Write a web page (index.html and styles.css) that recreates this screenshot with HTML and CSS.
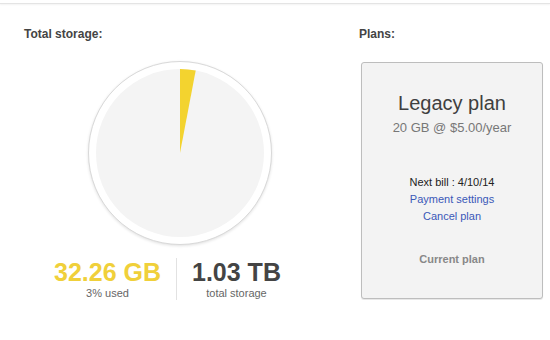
FILE: index.html
```html
<!DOCTYPE html>
<html lang="en">
<head>
    <meta charset="UTF-8">
    <title>Storage</title>
    <link rel="stylesheet" href="styles.css">
</head>
<body>
    <div class="topbar"></div>

    <div class="page">
        <div class="storage">
            <h3>Total storage:</h3>

            <div class="pie">
                <svg width="168" height="168" viewBox="0 0 168 168">
                    <circle cx="84" cy="84" r="84" fill="#f4f4f4"/>
                    <!-- 3% used -->
                    <path d="M84 84 L84 0 A84 84 0 0 1 99.7 1.5 Z" fill="#f3d32f"/>
                </svg>
            </div>

            <div class="stats">
                <div class="stat used">
                    <div class="num">32.26 GB</div>
                    <div class="cap">3% used</div>
                </div>
                <div class="stat total">
                    <div class="num">1.03 TB</div>
                    <div class="cap">total storage</div>
                </div>
            </div>
        </div>

        <div class="plans">
            <h3>Plans:</h3>
            <div class="card">
                <div class="plan-name">Legacy plan</div>
                <div class="plan-price">20 GB @ $5.00/year</div>
                <div class="bill">
                    <div>Next bill : 4/10/14</div>
                    <a href="#">Payment settings</a>
                    <a href="#">Cancel plan</a>
                </div>
                <div class="current">Current plan</div>
            </div>
        </div>
    </div>
</body>
</html>
```

FILE: styles.css
```css
body {
    margin: 0;
    font-family: 'Liberation Sans', Arial, sans-serif;
    color: #444;
    background-color: white;
}

.topbar {
    height: 3px;
    border-bottom: 1px solid #e4e4e4;
    box-shadow: 0 1px 2px rgba(0, 0, 0, 0.05);
}

.page {
    display: flex;
    padding-top: 23px;
}

h3 {
    margin: 0;
    font-size: 12px;
    line-height: 15px;
    font-weight: bold;
    color: #444;
}

.storage {
    width: 312px;
    margin-left: 24px;
}

.pie {
    width: 168px;
    height: 168px;
    margin: 19px 0 0 64px;
    padding: 7px;
    background-color: white;
    border: 1px solid #d9d9d9;
    border-radius: 50%;
    box-shadow: 0 1px 3px rgba(0, 0, 0, 0.12);
}

.pie svg {
    display: block;
}

.stats {
    display: flex;
    margin: 13px 0 0 30px;
}

.stat {
    text-align: center;
}

.stat.used {
    padding-right: 15px;
    border-right: 1px solid #e2e2e2;
}

.stat.total {
    padding-left: 15px;
}

.num {
    font-size: 25px;
    line-height: 29px;
    font-weight: bold;
}

.used .num {
    color: #f0d03a;
}

.cap {
    font-size: 11px;
    line-height: 13px;
    color: #666;
}

.plans {
    margin-left: 23px;
}

.card {
    box-sizing: border-box;
    width: 182px;
    height: 237px;
    margin: 20px 0 0 2px;
    padding-top: 28px;
    background-color: #f3f3f3;
    border: 1px solid #bdbdbd;
    border-radius: 3px;
    box-shadow: 0 1px 1px rgba(0, 0, 0, 0.1);
    text-align: center;
}

.plan-name {
    font-size: 20px;
    line-height: 24px;
    color: #3f3f3f;
}

.plan-price {
    margin-top: 5px;
    font-size: 13px;
    line-height: 16px;
    color: #777;
}

.bill {
    margin-top: 38px;
    font-size: 11px;
    line-height: 17px;
    color: #222;
}

.bill a {
    display: block;
    color: #3a58b8;
    text-decoration: none;
}

.current {
    margin-top: 26px;
    font-size: 11px;
    line-height: 17px;
    font-weight: bold;
    color: #888;
}
```
